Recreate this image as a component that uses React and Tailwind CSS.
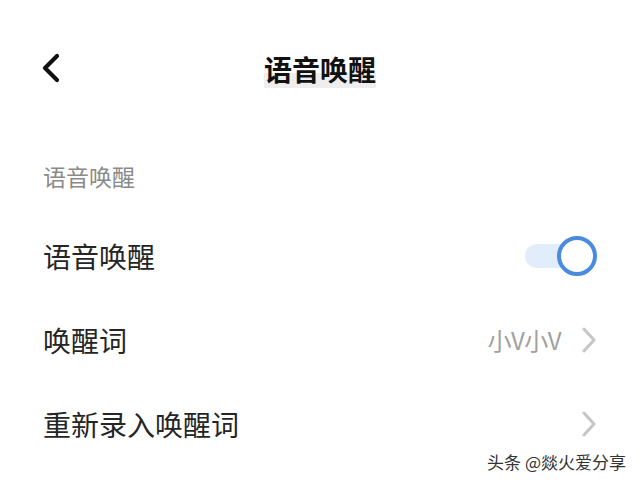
import React from 'react';

const font = { fontFamily: '"Noto Sans CJK SC", "Noto Sans", sans-serif' };

const Chevron = () => (
  <svg width="16" height="26" viewBox="0 0 16 26" className="shrink-0">
    <path d="M3 2 L13 13 L3 24" fill="none" stroke="#c6c6c6" strokeWidth="3" strokeLinecap="round" strokeLinejoin="round" />
  </svg>
);

const Toggle = ({ on }) => (
  <div className="relative w-[72px] h-[42px] flex items-center">
    <div className="w-[46px] h-[24px] rounded-full bg-[#e1edfb]" />
    {on && (
      <div className="absolute right-0 top-[1px] w-[40px] h-[40px] rounded-full border-[4px] border-[#4a8be0] bg-white" />
    )}
  </div>
);

const Row = ({ label, children }) => (
  <div className="h-[84px] flex items-center justify-between pl-[43px] pr-[43px]">
    <span className="text-[28px] leading-none text-[#252525]">{label}</span>
    <div className="flex items-center gap-[20px]">{children}</div>
  </div>
);

export default function App() {
  return (
    <div className="relative w-[640px] h-[482px] bg-white overflow-hidden" style={font}>
      {/* top bar */}
      <div className="relative h-[138px] flex items-center justify-center">
        <svg width="22" height="30" viewBox="0 0 22 30" className="absolute left-[40px] top-[53px]">
          <path d="M17 3 L5 15 L17 27" fill="none" stroke="#111" strokeWidth="4.2" strokeLinecap="round" strokeLinejoin="round" />
        </svg>
        <span className="inline-block mt-[2px] pb-[2px] text-[28px] leading-[34px] font-bold text-[#111] bg-[linear-gradient(to_bottom,transparent_58%,#eeeeee_58%)]">
          语音唤醒
        </span>
      </div>

      <div className="pl-[43px] mt-[23px] text-[23px] leading-[30px] text-[#8a8a8a]">语音唤醒</div>

      <div className="mt-[23px]">
        <Row label="语音唤醒">
          <Toggle on />
        </Row>
        <Row label="唤醒词">
          <span className="text-[24px] text-[#a0a0a0] tracking-[-0.5px]">小V小V</span>
          <Chevron />
        </Row>
        <Row label="重新录入唤醒词">
          <Chevron />
        </Row>
      </div>

      {/* watermark */}
      <div className="absolute right-[14px] bottom-[12px] text-[17px] leading-none text-[#333] [text-shadow:0_0_2px_#fff]">
        头条 @燚火爱分享
      </div>
    </div>
  );
}
